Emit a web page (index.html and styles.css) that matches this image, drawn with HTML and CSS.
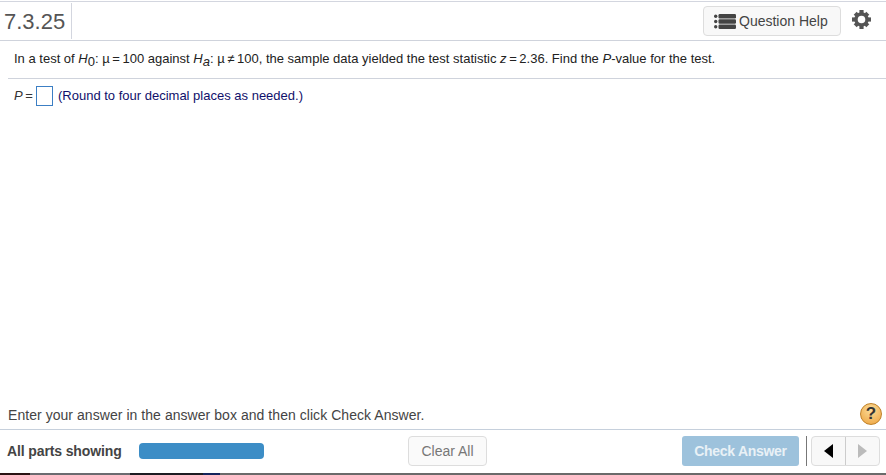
FILE: index.html
```html
<!DOCTYPE html>
<html lang="en">
<head>
  <meta charset="UTF-8">
  <title>7.3.25</title>
  <link rel="stylesheet" href="styles.css">
</head>
<body>
  <div class="page">
    <header class="top-bar">
      <div class="question-number">7.3.25</div>
      <button class="help-button">
        <svg class="list-icon" width="22" height="15" viewBox="0 0 22 15">
          <circle cx="1.7" cy="2.2" r="1.7"/>
          <circle cx="1.7" cy="7.5" r="1.7"/>
          <circle cx="1.7" cy="12.8" r="1.7"/>
          <rect x="4.5" y="0" width="17.5" height="4.4" rx="1.2"/>
          <rect x="4.5" y="5.3" width="17.5" height="4.4" rx="1.2"/>
          <rect x="4.5" y="10.6" width="17.5" height="4.4" rx="1.2"/>
        </svg>
        Question Help
      </button>
      <svg class="gear" width="19" height="19" viewBox="0 0 20 20">
        <circle cx="10" cy="10" r="5.8" fill="none" stroke-width="3.6"/>
        <rect x="7.8" y="0" width="4.4" height="4"/>
        <rect x="7.8" y="16" width="4.4" height="4"/>
        <rect x="0" y="7.8" width="4" height="4.4"/>
        <rect x="16" y="7.8" width="4" height="4.4"/>
        <rect x="7.8" y="0.6" width="4.4" height="4" transform="rotate(45 10 10)"/>
        <rect x="7.8" y="15.4" width="4.4" height="4" transform="rotate(45 10 10)"/>
        <rect x="0.6" y="7.8" width="4" height="4.4" transform="rotate(45 10 10)"/>
        <rect x="15.4" y="7.8" width="4" height="4.4" transform="rotate(45 10 10)"/>
      </svg>
    </header>

    <main class="question">
      <p class="question-text">In a test of <i>H</i><sub>0</sub>: µ&#8201;=&#8201;100 against <i>H</i><sub><i>a</i></sub>: µ&#8201;≠&#8201;100, the sample data yielded the test statistic <i>z</i>&#8201;=&#8201;2.36. Find the <i>P</i>-value for the test.</p>
      <div class="answer-row">
        <span class="answer-label"><i>P</i>&#8201;=</span>
        <span class="answer-box"></span>
        <span class="answer-note">(Round to four decimal places as needed.)</span>
      </div>
    </main>

    <div class="hint-row">
      <span class="hint-text">Enter your answer in the answer box and then click Check Answer.</span>
      <span class="help-circle">?</span>
    </div>

    <footer class="bottom-bar">
      <b class="parts-label">All parts showing</b>
      <div class="progress"></div>
      <button class="clear-button">Clear All</button>
      <button class="check-button">Check Answer</button>
      <div class="divider"></div>
      <div class="nav-buttons">
        <button class="nav-button"><span class="arrow-left"></span></button>
        <button class="nav-button"><span class="arrow-right"></span></button>
      </div>
    </footer>
    <div class="bottom-edge"></div>
  </div>
</body>
</html>
```

FILE: styles.css
```css
* {
  box-sizing: border-box;
}

html, body {
  margin: 0;
  padding: 0;
  height: 100%;
  overflow: hidden;
}

body {
  font-family: "Liberation Sans", Arial, sans-serif;
  background-color: white;
}

.page {
  display: flex;
  flex-direction: column;
  height: 475px;
  padding-top: 1px;
}

.top-bar {
  display: flex;
  align-items: center;
  height: 40px;
  border-top: 1px solid #d3d6df;
  border-bottom: 1px solid #cfd3dc;
}

.question-number {
  width: 72px;
  height: 36px;
  padding-left: 4px;
  border-right: 1px solid #d3d6df;
  font-size: 22px;
  line-height: 37px;
  color: #555;
}

.help-button {
  display: flex;
  align-items: center;
  gap: 3px;
  width: 138px;
  height: 30px;
  margin-left: auto;
  padding: 0 0 0 10px;
  border: 1px solid #ddd;
  border-radius: 4px;
  background-color: #f8f8f8;
  font-family: inherit;
  font-size: 14px;
  color: #444;
}

.list-icon {
  fill: #444;
}

.gear {
  margin: 0 15px 3px 11px;
  fill: #555;
  stroke: #555;
  stroke-width: 0;
}

.gear circle {
  stroke-width: 3.6;
}

.question {
  flex: 1;
  padding: 0 0 0 8px;
}

.question-text {
  margin: 0 0 0 6px;
  padding: 9px 0 0;
  height: 37px;
  font-size: 13px;
  line-height: 17px;
  color: #222;
}

.question-text sub {
  font-size: 13px;
  line-height: 0;
  vertical-align: -3px;
}

.answer-row {
  display: flex;
  align-items: center;
  height: 34px;
  padding-left: 6px;
  border-top: 1px solid #cfd3dc;
  margin-right: -4px;
  width: 882px;
  font-size: 13px;
  color: #111;
}

.answer-label {
  width: 22px;
  color: #333;
}

.answer-box {
  width: 17px;
  height: 20px;
  margin: 0 5px 0 0;
  border: 1px solid #3c7fc4;
  background-color: white;
}

.answer-note {
  color: #10106b;
}

.hint-row {
  display: flex;
  align-items: center;
  justify-content: space-between;
  height: 30px;
  padding: 0 4px 0 8px;
  font-size: 14px;
  letter-spacing: 0.05px;
  color: #444;
}

.hint-text {
  margin-top: 2px;
}

.help-circle {
  width: 22px;
  height: 22px;
  border: 1px solid #bf8128;
  border-radius: 50%;
  background: radial-gradient(circle at 50% 30%, #fbdc9a, #eda23c);
  text-align: center;
  font-size: 17px;
  font-weight: bold;
  line-height: 20px;
  color: #333;
}

.bottom-bar {
  display: flex;
  align-items: center;
  height: 44px;
  padding: 0 0 2px 7px;
  border-top: 1px solid #c6d0dc;
}

.parts-label {
  width: 132px;
  font-size: 14px;
  letter-spacing: -0.12px;
  color: #444;
}

.progress {
  width: 125px;
  height: 16px;
  border-radius: 4px;
  background-color: #3c8dc6;
}

.clear-button {
  width: 79px;
  height: 30px;
  margin-left: 144px;
  border: 1px solid #ddd;
  border-radius: 4px;
  background-color: #fafafa;
  font-family: inherit;
  font-size: 14px;
  color: #777;
}

.check-button {
  width: 117px;
  height: 30px;
  margin-left: 195px;
  padding: 0;
  border: none;
  border-radius: 3px;
  background-color: #9dc2dc;
  font-family: inherit;
  font-size: 14px;
  font-weight: bold;
  letter-spacing: -0.3px;
  color: #e9f1f6;
}

.divider {
  width: 1px;
  height: 30px;
  margin: 0 4px 0 7px;
  background-color: #777;
}

.nav-buttons {
  display: flex;
  width: 69px;
  height: 30px;
  border: 1px solid #ddd;
  border-radius: 4px;
  background-color: #f8f8f8;
}

.nav-button {
  display: flex;
  align-items: center;
  justify-content: center;
  width: 34px;
  padding: 0;
  border: none;
  background: none;
}

.nav-button:first-child {
  border-right: 1px solid #ccc;
}

.arrow-left {
  border-top: 7px solid transparent;
  border-bottom: 7px solid transparent;
  border-right: 9px solid black;
}

.arrow-right {
  border-top: 7px solid transparent;
  border-bottom: 7px solid transparent;
  border-left: 9px solid #bbb;
}

/* strip of the next thing on the screen, cut off by the window */
.bottom-edge {
  height: 2px;
  background: linear-gradient(to right, #2a1414 0 30px, #6b6b70 30px 130px, #1c1c22 130px 203px, #14245c 203px 220px, #6a6a6a 220px);
}
```
